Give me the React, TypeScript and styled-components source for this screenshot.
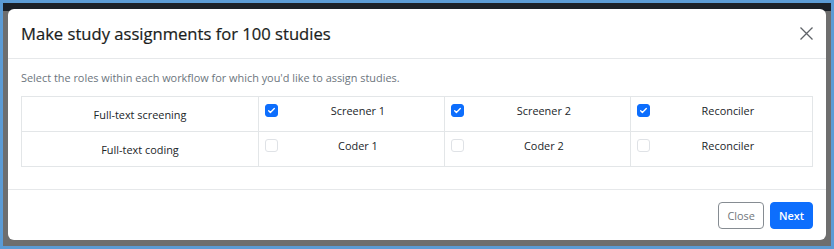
import React, { useState } from 'react'
import styled, { createGlobalStyle } from 'styled-components'

const GlobalStyle = createGlobalStyle`
  html, body {
    margin: 0;
    padding: 0;
    background: #6b6b6b;
  }
  body {
    font-family: "Open Sans", "Noto Sans", "Liberation Sans", sans-serif;
    color: #212529;
  }
`

const Frame = styled.div`
  box-sizing: border-box;
  width: 834px;
  height: 249px;
  border: 3px solid #5b9bd5;
  background: linear-gradient(to bottom, #1b2027 0, #1b2027 8px, #6e6e6e 8px);
  padding: 6px 5px 6px 5px;
  display: flex;
`

const Modal = styled.div`
  flex: 1;
  display: flex;
  flex-direction: column;
  background: #fff;
  border-radius: 6px;
  overflow: hidden;
`

const Header = styled.div`
  display: flex;
  align-items: center;
  justify-content: space-between;
  height: 49px;
  padding: 0 12px 0 13px;
  border-bottom: 1px solid #e6e8ea;
`

const Title = styled.h5`
  margin: 0;
  font-size: 16.6px;
  font-weight: 500;
  color: #1a1d20;
  -webkit-text-stroke: 0.2px #1a1d20;
`

const CloseX = styled.button`
  border: none;
  background: none;
  padding: 0;
  width: 16px;
  height: 16px;
  display: flex;
  align-items: center;
  justify-content: center;
  cursor: pointer;
`

const Body = styled.div`
  flex: 1;
  padding: 8px 13px 0 13px;
`

const Intro = styled.p`
  margin: 0 0 8px 0;
  font-size: 10.9px;
  line-height: 21px;
  color: #6c757d;
`

const Table = styled.table`
  width: 100%;
  border-collapse: collapse;
  font-size: 10.9px;
  color: #212529;
  td {
    border: 1px solid #e3e6e8;
    height: 34px;
    padding: 0;
  }
`

const WorkflowCell = styled.td`
  width: 236px;
  text-align: center;
  vertical-align: middle;
`

const RoleCell = styled.td`
  vertical-align: top;
`

const RoleInner = styled.label`
  display: flex;
  align-items: center;
  padding: 2px 6px 0 6px;
  height: 22px;
  cursor: pointer;
`

const Box = styled.span<{ checked: boolean }>`
  flex: none;
  box-sizing: border-box;
  width: 13px;
  height: 13px;
  border-radius: 3px;
  border: 1px solid ${({ checked }) => (checked ? '#0d6efd' : '#dfe2e6')};
  background: ${({ checked }) => (checked ? '#0d6efd' : '#fff')};
  display: flex;
  align-items: center;
  justify-content: center;
`

const RoleName = styled.span`
  flex: 1;
  text-align: center;
`

const Footer = styled.div`
  display: flex;
  justify-content: flex-end;
  align-items: center;
  gap: 6px;
  height: 50px;
  padding: 0 13px;
  border-top: 1px solid #e6e8ea;
`

const Button = styled.button<{ primary?: boolean }>`
  height: 27px;
  padding: 0 8px;
  border-radius: 4px;
  font-family: inherit;
  font-size: 10.9px;
  font-weight: ${({ primary }) => (primary ? 600 : 400)};
  border: 1px solid ${({ primary }) => (primary ? '#0d6efd' : '#868c92')};
  background: ${({ primary }) => (primary ? '#0d6efd' : '#fff')};
  color: ${({ primary }) => (primary ? '#fff' : '#6f767c')};
  cursor: pointer;
`

const rows = [
  { workflow: 'Full-text screening', roles: [['Screener 1', true], ['Screener 2', true], ['Reconciler', true]] },
  { workflow: 'Full-text coding', roles: [['Coder 1', false], ['Coder 2', false], ['Reconciler', false]] },
] as const

function Check({ checked }: { checked: boolean }) {
  return (
    <Box checked={checked}>
      {checked && (
        <svg width="9" height="9" viewBox="0 0 16 16">
          <path d="M3 8.5l3 3 7-7" fill="none" stroke="#fff" strokeWidth="2.4" strokeLinecap="round" strokeLinejoin="round" />
        </svg>
      )}
    </Box>
  )
}

export default function App() {
  const [state, setState] = useState(rows.map(r => r.roles.map(role => role[1] as boolean)))

  const toggle = (i: number, j: number) =>
    setState(s => s.map((r, ri) => (ri === i ? r.map((v, rj) => (rj === j ? !v : v)) : r)))

  return (
    <>
      <GlobalStyle />
      <Frame>
        <Modal>
          <Header>
            <Title>Make study assignments for 100 studies</Title>
            <CloseX aria-label="Close">
              <svg width="13" height="13" viewBox="0 0 13 13">
                <path d="M0.5 0.5l12 12M12.5 0.5l-12 12" stroke="#5f6368" strokeWidth="1.3" />
              </svg>
            </CloseX>
          </Header>
          <Body>
            <Intro>Select the roles within each workflow for which you'd like to assign studies.</Intro>
            <Table>
              <tbody>
                {rows.map((row, i) => (
                  <tr key={row.workflow}>
                    <WorkflowCell>{row.workflow}</WorkflowCell>
                    {row.roles.map(([name], j) => (
                      <RoleCell key={name}>
                        <RoleInner onClick={() => toggle(i, j)}>
                          <Check checked={state[i][j]} />
                          <RoleName>{name}</RoleName>
                        </RoleInner>
                      </RoleCell>
                    ))}
                  </tr>
                ))}
              </tbody>
            </Table>
          </Body>
          <Footer>
            <Button>Close</Button>
            <Button primary>Next</Button>
          </Footer>
        </Modal>
      </Frame>
    </>
  )
}
